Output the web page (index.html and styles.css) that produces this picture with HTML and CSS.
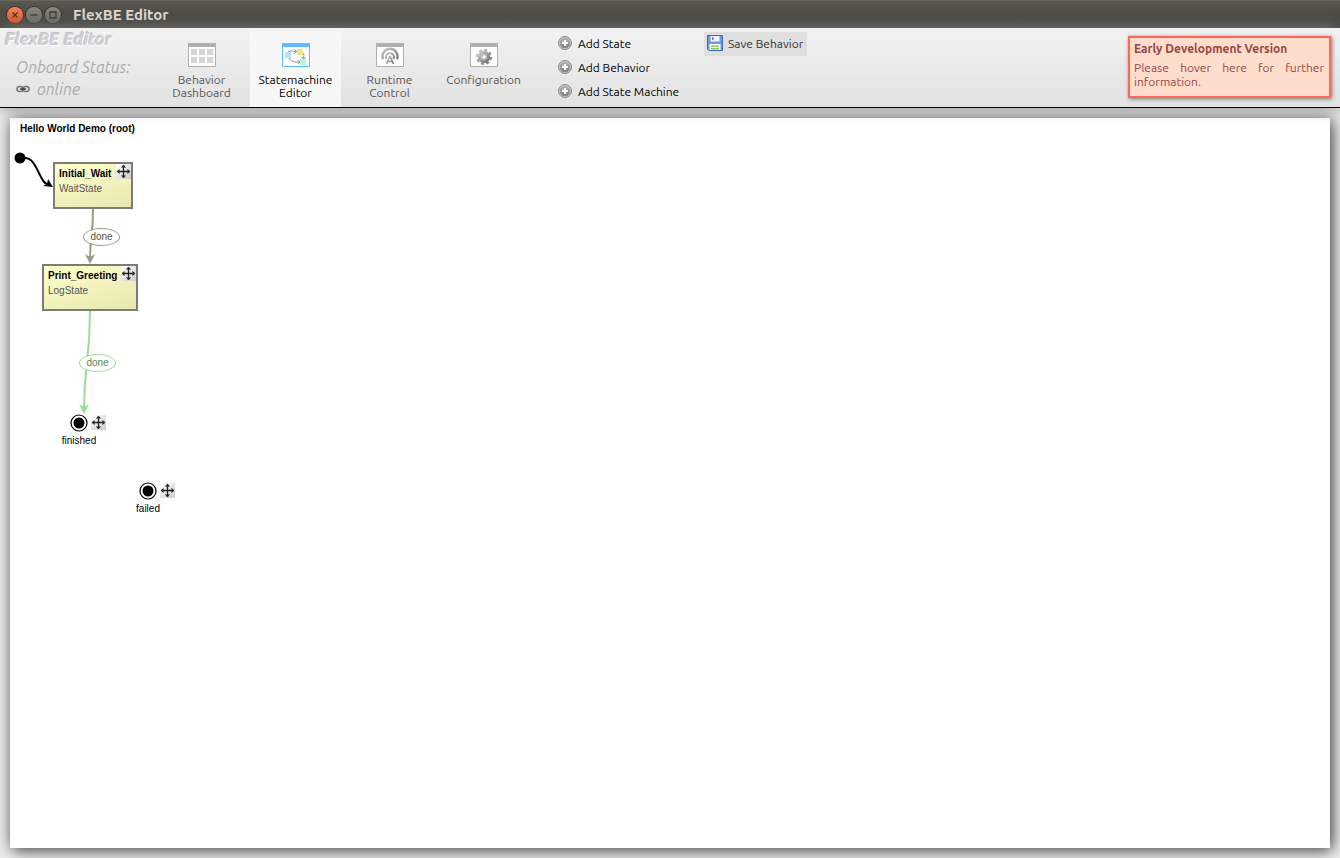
FILE: index.html
```html
<!DOCTYPE html>
<html lang="en">
<head>
<meta charset="utf-8">
<title>FlexBE Editor</title>
<link rel="stylesheet" href="styles.css">
</head>
<body>
<svg class="defs" aria-hidden="true">
  <defs>
    <linearGradient id="grey" x1="0" y1="0" x2="1" y2="1"><stop offset="0" stop-color="#c8c8c8"/><stop offset="1" stop-color="#777"/></linearGradient>
    <linearGradient id="plus" x1="0" y1="0" x2="0" y2="1"><stop offset="0" stop-color="#b4b4b4"/><stop offset="1" stop-color="#808080"/></linearGradient>
    <linearGradient id="corner" x1="0" y1="0" x2="1" y2="1"><stop offset="0" stop-color="#fff"/><stop offset="1" stop-color="#ccc"/></linearGradient>
    <symbol id="move" viewBox="0 0 15 15">
      <rect width="15" height="15" fill="url(#corner)"/>
      <path d="M7.500 2v11M2 7.500h11" stroke="#222" stroke-width="1.300"/>
      <path d="M5.500 3.500l2-2.500 2 2.500M5.500 11.500l2 2.500 2-2.500M3.500 5.500L1 7.500l2.500 2M11.500 5.500l2.500 2-2.500 2" fill="#222" stroke="#222" stroke-width=".8"/>
    </symbol>
    <symbol id="add" viewBox="0 0 14 14">
      <circle cx="7" cy="7" r="6.500" fill="#ccc" stroke="#888"/>
      <circle cx="7" cy="7" r="5.300" fill="url(#plus)"/>
      <path d="M7 4v6M4 7h6" stroke="#fff" stroke-width="2"/>
    </symbol>
    <symbol id="window" viewBox="0 0 28 24">
      <path d="M.5.5h27v23H.5z" fill="#fff" stroke="currentColor"/>
      <path d="M0 0h28v4H0z" fill="currentColor"/>
    </symbol>
    <symbol id="final" viewBox="0 0 18 18">
      <circle cx="9" cy="9" r="8" fill="#fff" stroke="#000" stroke-width="1.200"/>
      <circle cx="9" cy="9" r="5.500"/>
    </symbol>
  </defs>
</svg>

<div class="titlebar">
  <button class="wm wm-close" aria-label="Close"><svg viewBox="0 0 16 16"><path d="M5.500 5.500l5 5m0-5l-5 5"/></svg></button>
  <button class="wm" aria-label="Minimize"><svg viewBox="0 0 16 16"><path d="M4.500 8h7"/></svg></button>
  <button class="wm" aria-label="Maximize"><svg viewBox="0 0 16 16"><path d="M5 5h6v6H5z"/></svg></button>
  <span class="window-title">FlexBE Editor</span>
</div>

<header class="toolbar">
  <div class="brand">
    <div class="brand-name">FlexBE Editor</div>
    <div class="status">Onboard Status:</div>
    <div class="status status-value">
      <svg class="link-icon" viewBox="0 0 14 8"><g fill="none"><rect x="1" y="1.500" width="6" height="5" rx="2.500" stroke="#777" stroke-width="1.600"/><rect x="7" y="1.500" width="6" height="5" rx="2.500" stroke="#777" stroke-width="1.600"/><path d="M4 4h6" stroke="#444" stroke-width="1.600"/></g></svg>
      online
    </div>
  </div>

  <nav class="tabs">
    <button class="tab">
      <svg class="tab-icon" viewBox="0 0 28 24"><use href="#window"/><path d="M3 6h6v6H3zm8 0h6v6h-6zm8 0h6v6h-6zM3 14h6v6H3zm8 0h6v6h-6zm8 0h6v6h-6z" fill="#d5d5d5"/></svg>
      <span>Behavior<br>Dashboard</span>
    </button>
    <button class="tab tab-active">
      <svg class="tab-icon" viewBox="0 0 28 24"><use href="#window"/><path d="M6 9Q8 7 14 8.500M21 10q2 2 0 6M7 15q2 5 11 4M12 6.500l3 2-3 2M19.500 14l2 2.500 2-2.500M15.500 17l3 2-3 2" fill="none" stroke="#999"/><path d="M3 9h6v6H3z" fill="#aee4ff"/><path d="M15 6h6v6h-6z" fill="#ede77b"/><path d="M18 16h6v6h-6z" fill="#a8ffe0"/></svg>
      <span>Statemachine<br>Editor</span>
    </button>
    <button class="tab">
      <svg class="tab-icon" viewBox="0 0 28 24"><use href="#window"/><g fill="none" stroke="url(#grey)"><path d="M7 16a7.500 7.500 0 1 1 14 0" stroke-width="2.400"/><path d="M10.500 16a4 4 0 1 1 7 0" stroke-width="1.800"/><path d="M14 13l-3.500 8M14 13l3.500 8M12 18.500h4" stroke-width="1.700"/></g></svg>
      <span>Runtime<br>Control</span>
    </button>
    <button class="tab">
      <svg class="tab-icon" viewBox="0 0 28 24"><use href="#window"/><circle cx="14" cy="14" r="6.800" fill="none" stroke="url(#grey)" stroke-width="2.600" stroke-dasharray="3 2.340"/><circle cx="14" cy="14" r="4.500" fill="none" stroke="url(#grey)" stroke-width="3.400"/><circle cx="14" cy="14" r="2.300" fill="#fff" stroke="#aaa"/></svg>
      <span>Configuration</span>
    </button>
  </nav>

  <div class="actions">
    <button class="action"><svg class="add-icon"><use href="#add"/></svg>Add State</button>
    <button class="action"><svg class="add-icon"><use href="#add"/></svg>Add Behavior</button>
    <button class="action"><svg class="add-icon"><use href="#add"/></svg>Add State Machine</button>
  </div>

  <button class="save">
    <svg class="save-icon" viewBox="0 0 16 16"><path d="M.5.5h15v15H2l-1.500-1.500z" fill="#6c9be0" stroke="#3a69b5"/><path d="M3.500 1h9v5.500h-9z" fill="#eef4fd"/><path d="M5 2h1.500v3H5z" fill="#5e82b5"/><path d="M2.500 9h11v6h-11z" fill="#fff"/><path d="M4 10.500h8V12H4zm0 2.500h8v1.500H4z" fill="#8cc665"/></svg>
    Save Behavior
  </button>

  <aside class="notice">
    <h2 class="notice-title">Early Development Version</h2>
    <p class="notice-text">Please hover here for further information.</p>
  </aside>
</header>

<main class="workspace">
  <section class="canvas">
    <h1 class="canvas-title">Hello World Demo (root)</h1>
    <svg class="edges" aria-hidden="true">
      <circle cx="10" cy="40" r="5.500"/>
      <g fill="none" stroke-width="2">
        <path d="M15 40C28 40 29 67 40 67" stroke="#000"/>
        <path d="M83 91C83 118 80 118 80 143" stroke="#998"/>
        <path d="M80 193C80 244 74 244 74 293" stroke="#9d9"/>
      </g>
      <path d="M43 69l-10-1 4-2 1-5z" fill="#000"/>
      <path d="M80 146l-5-10 5 3 5-3z" fill="#998"/>
      <path d="M74 296l-5-10 5 3 5-3z" fill="#9d9"/>
    </svg>

    <div class="state state-wait"><strong class="state-name">Initial_Wait</strong><span class="state-type">WaitState</span><svg class="move state-move"><use href="#move"/></svg></div>
    <div class="state state-log"><strong class="state-name">Print_Greeting</strong><span class="state-type">LogState</span><svg class="move state-move"><use href="#move"/></svg></div>

    <span class="transition transition-wait">done</span>
    <span class="transition transition-log">done</span>

    <div class="outcome outcome-finished"><svg class="final"><use href="#final"/></svg><svg class="move outcome-move"><use href="#move"/></svg><span>finished</span></div>
    <div class="outcome outcome-failed"><svg class="final"><use href="#final"/></svg><svg class="move outcome-move"><use href="#move"/></svg><span>failed</span></div>
  </section>
</main>
</body>
</html>
```

FILE: styles.css
```css
* { box-sizing: border-box; }

body {
  margin: 0;
  min-height: 100vh;
  display: flex;
  flex-direction: column;
  background: #eee;
  font: 12px/13px "Ubuntu", "Noto Sans", sans-serif;
  color: #000;
}

button {
  margin: 0;
  padding: 0;
  border: 0;
  background: none;
  font: inherit;
  color: inherit;
}

svg { display: block; flex: none; }
.defs { position: absolute; width: 0; height: 0; }

/* Window frame */
.titlebar {
  display: flex;
  align-items: center;
  gap: 3px;
  height: 28px;
  padding: 0 7px;
  background: linear-gradient(#5a5850, #3e3d38);
  border-top: 1px solid #69675f;
}
.wm {
  width: 16px;
  height: 16px;
  border-radius: 50%;
  background: linear-gradient(#8b8981, #67655e);
  box-shadow: 0 0 0 1px #35342f;
}
.wm-close { background: linear-gradient(#f58259, #e5501f); }
.wm svg { width: 16px; height: 16px; fill: none; stroke: #3a3833; stroke-width: 1.3; }
.window-title { margin-left: 9px; font-size: 15px; line-height: 20px; font-weight: 700; color: #dfdbd2; }

/* Toolbar */
.toolbar {
  position: relative;
  z-index: 1;
  display: flex;
  align-items: flex-start;
  height: 80px;
  background: linear-gradient(#f2f2f2, #e2e2e2);
  border-bottom: 1px solid #000;
  box-shadow: 0 0 15px #888;
}
.brand { width: 156px; padding-left: 5px; font-style: italic; white-space: nowrap; }
.brand-name {
  font-size: 17px;
  line-height: 21px;
  font-weight: 600;
  color: #d2d2d2;
  text-shadow: 1px 1px 1px #fff, -1px -1px 1px #bbb;
}
.status { padding-left: 11px; font-size: 16px; line-height: 22px; color: #aaa; margin-top: 7px; }
.status-value { display: flex; align-items: center; gap: 7px; margin-top: 0; }
.link-icon { width: 14px; height: 8px; }

.tabs { display: flex; padding-top: 3px; gap: 3px; }
.tab {
  display: flex;
  flex-direction: column;
  align-items: center;
  gap: 6px;
  width: 91px;
  height: 76px;
  padding-top: 12px;
  color: #555;
}
.tab-active { background: #f7f7f7; color: #000; }
.tab-icon { width: 28px; height: 24px; color: #b0b0b0; }
.tab-active .tab-icon { color: #61b9ff; }

.actions { display: flex; flex-direction: column; margin-left: 29px; padding-top: 3px; width: 146px; }
.action { display: flex; align-items: center; gap: 6px; height: 24px; white-space: nowrap; }
.add-icon { width: 14px; height: 14px; }
.save {
  display: flex;
  align-items: center;
  gap: 5px;
  height: 24px;
  margin-top: 4px;
  padding: 0 4px 2px 3px;
  background: #dfdfdf;
  color: #333;
  white-space: nowrap;
}
.save-icon { width: 16px; height: 16px; }

.notice {
  width: 203px;
  height: 62px;
  margin: 8px 9px 0 auto;
  padding: 4px 5px 4px 4px;
  border: 2px solid #f65;
  background: #fdc;
  box-shadow: 1px 1px 4px #777;
  color: #944;
  line-height: 14px;
}
.notice-title { margin: 0 0 5px; font-size: 12px; line-height: 14px; }
.notice-text { margin: 0; text-align: justify; }

/* Editor canvas */
.workspace { flex: 1; display: flex; padding: 10px; }
.canvas {
  position: relative;
  flex: 1;
  background: #fff;
  box-shadow: 2px 2px 15px #333;
  font: 10px/15px "Liberation Sans", Arial, sans-serif;
}
.canvas-title { margin: 3px 0 0 10px; font-size: 10px; line-height: 15px; }
.edges { position: absolute; inset: 0; width: 100%; height: 100%; }

.state {
  position: absolute;
  display: flex;
  flex-direction: column;
  height: 47px;
  padding: 2px 4px;
  border: 2px solid #7d7d74;
  background: linear-gradient(160deg, #ffc, #e8e6b0);
  color: #555;
}
.state-wait { left: 43px; top: 44px; width: 80px; }
.state-log { left: 32px; top: 146px; width: 96px; }
.state-name { color: #000; }
.move { width: 15px; height: 15px; }
.state-move { position: absolute; top: 0; right: 0; }

.transition {
  position: absolute;
  width: 37px;
  height: 18px;
  border: 1px solid #998;
  border-radius: 50%;
  background: #fff;
  line-height: 16px;
  text-align: center;
  color: #554;
}
.transition-wait { left: 73px; top: 110px; }
.transition-log { left: 69px; top: 236px; border-color: #9d9; color: #585; }

.outcome { position: absolute; width: 60px; display: flex; flex-direction: column; align-items: center; gap: 1px; }
.outcome-finished { left: 39px; top: 296px; }
.outcome-failed { left: 108px; top: 364px; }
.final { width: 18px; height: 18px; }
.outcome-move { position: absolute; left: 42px; top: 1px; }
```
